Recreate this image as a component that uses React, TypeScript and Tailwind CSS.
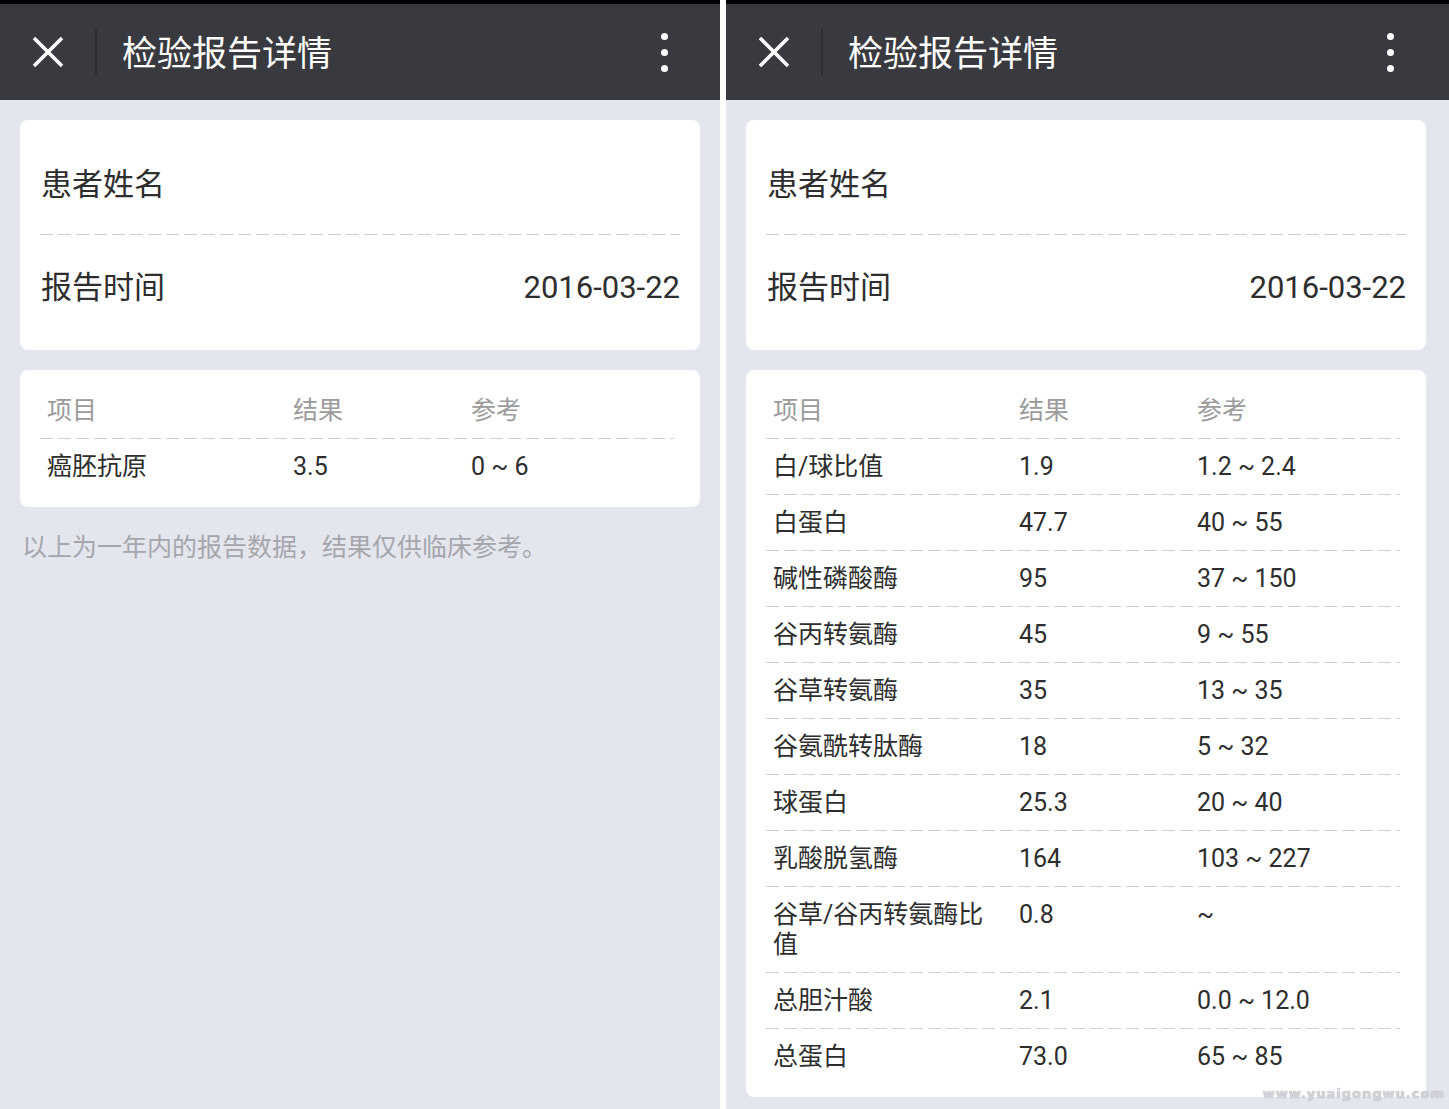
type Row = { name: string; result: string; range: string };

const singleRows: Row[] = [{ name: "癌胚抗原", result: "3.5", range: "0 ~ 6" }];

const liverRows: Row[] = [
  { name: "白/球比值", result: "1.9", range: "1.2 ~ 2.4" },
  { name: "白蛋白", result: "47.7", range: "40 ~ 55" },
  { name: "碱性磷酸酶", result: "95", range: "37 ~ 150" },
  { name: "谷丙转氨酶", result: "45", range: "9 ~ 55" },
  { name: "谷草转氨酶", result: "35", range: "13 ~ 35" },
  { name: "谷氨酰转肽酶", result: "18", range: "5 ~ 32" },
  { name: "球蛋白", result: "25.3", range: "20 ~ 40" },
  { name: "乳酸脱氢酶", result: "164", range: "103 ~ 227" },
  { name: "谷草/谷丙转氨酶比值", result: "0.8", range: "~" },
  { name: "总胆汁酸", result: "2.1", range: "0.0 ~ 12.0" },
  { name: "总蛋白", result: "73.0", range: "65 ~ 85" },
];

const font = "font-['Roboto','Noto_Sans_CJK_SC',sans-serif]";

// dashed separator, drawn with a gradient so the dash length matches
function Dashed({ className = "" }: { className?: string }) {
  return (
    <div
      className={`h-px bg-[linear-gradient(to_right,#cfcfd4_13px,transparent_13px)] bg-[length:18px_1px] bg-repeat-x ${className}`}
    />
  );
}

function Header() {
  return (
    <div className="h-24 bg-[#393a40]">
      <div className="flex h-full w-[720px] items-center">
        <svg className="ml-8 h-8 w-8" viewBox="0 0 32 32" fill="none">
          <path d="M2 2L30 30M30 2L2 30" stroke="white" strokeWidth="3.6" />
        </svg>
        <div className="ml-[31px] h-[46px] w-0.5 bg-[#2c2d32]" />
        <h1 className="mt-1 ml-[25px] flex-1 text-[35px] leading-none text-white">检验报告详情</h1>
        <div className="mr-[52px] flex flex-col items-center gap-[9px]">
          <span className="h-[7px] w-[7px] rounded-full bg-white" />
          <span className="h-[7px] w-[7px] rounded-full bg-white" />
          <span className="h-[7px] w-[7px] rounded-full bg-white" />
        </div>
      </div>
    </div>
  );
}

function InfoCard() {
  return (
    <div className="rounded-lg bg-white px-5 pt-3 pb-[13px] text-[31px] text-[#2e2e2e]">
      <div className="flex h-[102px] items-center pt-1 pl-px">患者姓名</div>
      <Dashed />
      <div className="flex h-[102px] items-center justify-between pt-1 pl-px">
        <span>报告时间</span>
        <span>2016-03-22</span>
      </div>
    </div>
  );
}

function ResultCard({ rows }: { rows: Row[] }) {
  return (
    <div className="rounded-lg bg-white px-5 pt-3 pb-[13px] text-[25px] leading-[30px]">
      <div className="grid grid-cols-[246px_178px_1fr] pt-[14px] pb-3 text-[#9b9b9b]">
        <span className="pl-[7px]">项目</span>
        <span className="pl-[7px]">结果</span>
        <span className="pl-[7px]">参考</span>
      </div>
      {rows.map((r) => (
        <div key={r.name}>
          <Dashed className="mr-1.5" />
          <div className="grid grid-cols-[246px_178px_1fr] pt-[13px] pb-3 text-[#2e2e2e]">
            <span className="pr-5 pl-[7px]">{r.name}</span>
            <span className="pl-[7px]">{r.result}</span>
            <span className="pl-[7px]">{r.range}</span>
          </div>
        </div>
      ))}
    </div>
  );
}

function Screen({ children, wide }: { children: React.ReactNode; wide?: boolean }) {
  return (
    <div className={`relative flex flex-col bg-[#e4e6ee] ${wide ? "flex-1" : "w-[720px]"}`}>
      <div className="h-1 bg-black" />
      <Header />
      <div className="flex w-[720px] flex-col px-5 pt-5">{children}</div>
    </div>
  );
}

export default function App() {
  return (
    <div className={`flex h-[1109px] w-[1449px] overflow-hidden bg-white ${font}`}>
      <Screen>
        <InfoCard />
        <div className="mt-5">
          <ResultCard rows={singleRows} />
        </div>
        <p className="mt-[26px] pl-0.5 text-[25px] leading-[30px] text-[#a5a6ac]">
          以上为一年内的报告数据，结果仅供临床参考。
        </p>
      </Screen>
      <div className="w-1.5 bg-white" />
      <Screen wide>
        <InfoCard />
        <div className="mt-5">
          <ResultCard rows={liverRows} />
        </div>
        <span className="absolute right-1 bottom-1.5 text-[13px] font-bold tracking-[1px] text-[#d4d4da] [text-shadow:0_0_1px_#9a9aa2] font-['DejaVu_Sans',sans-serif]">
          www.yuaigongwu.com
        </span>
      </Screen>
    </div>
  );
}
